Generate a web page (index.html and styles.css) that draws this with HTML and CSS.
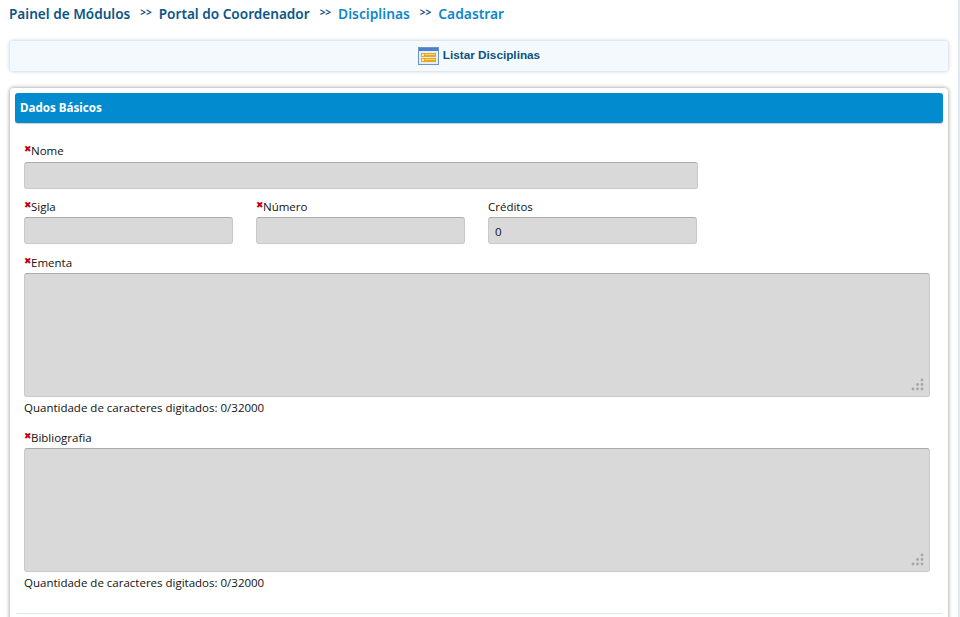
FILE: index.html
```html
<!DOCTYPE html>
<html lang="pt-BR">
<head>
<meta charset="utf-8">
<title>Cadastrar Disciplina</title>
<link rel="stylesheet" href="styles.css">
</head>
<body>
<div class="page">
  <nav class="crumbs">
    <span class="crumb">Painel de Módulos</span><span class="sep">&gt;&gt;</span>
    <span class="crumb">Portal do Coordenador</span><span class="sep">&gt;&gt;</span>
    <span class="crumb current">Disciplinas</span><span class="sep">&gt;&gt;</span>
    <span class="crumb current">Cadastrar</span>
  </nav>
  <div class="actions">
    <svg class="list-icon" width="21" height="18" viewBox="0 0 21 18">
      <rect x="0.5" y="0.5" width="20" height="17" fill="#e6eff9" stroke="#6c95c8"/>
      <rect x="1" y="1" width="19" height="3" fill="#4a7fcc"/>
      <rect x="3" y="6" width="15" height="4" fill="#e3a922"/>
      <rect x="3" y="11" width="15" height="4" fill="#e3a922"/>
      <rect x="7" y="7" width="10" height="1" fill="#f8d860"/>
      <rect x="7" y="12" width="10" height="1" fill="#f8d860"/>
      <rect x="4" y="7" width="2" height="2" fill="#fbeeb8"/>
      <rect x="4" y="12" width="2" height="2" fill="#fbeeb8"/>
    </svg>
    <span class="action-label">Listar Disciplinas</span>
  </div>
  <section class="panel">
    <h2 class="panel-title">Dados Básicos</h2>
    <form class="form">
      <div class="field name-field">
        <label class="label"><i class="req">✖</i>Nome</label>
        <div class="input"></div>
      </div>
      <div class="row">
        <div class="field"><label class="label"><i class="req">✖</i>Sigla</label><div class="input"></div></div>
        <div class="field"><label class="label"><i class="req">✖</i>Número</label><div class="input"></div></div>
        <div class="field"><label class="label">Créditos</label><div class="input">0</div></div>
      </div>
      <div class="field ementa-field">
        <label class="label"><i class="req">✖</i>Ementa</label>
        <div class="area"><svg class="grip" width="13" height="13" viewBox="0 0 13 13"><g fill="#a6a6a6"><circle cx="11" cy="2" r="1.4"/><circle cx="6.500" cy="6.500" r="1.400"/><circle cx="11" cy="6.500" r="1.400"/><circle cx="2" cy="11" r="1.400"/><circle cx="6.500" cy="11" r="1.400"/><circle cx="11" cy="11" r="1.400"/></g></svg></div>
        <p class="count">Quantidade de caracteres digitados: 0/32000</p>
      </div>
      <div class="field">
        <label class="label"><i class="req">✖</i>Bibliografia</label>
        <div class="area"><svg class="grip" width="13" height="13" viewBox="0 0 13 13"><g fill="#a6a6a6"><circle cx="11" cy="2" r="1.4"/><circle cx="6.500" cy="6.500" r="1.400"/><circle cx="11" cy="6.500" r="1.400"/><circle cx="2" cy="11" r="1.400"/><circle cx="6.500" cy="11" r="1.400"/><circle cx="11" cy="11" r="1.400"/></g></svg></div>
        <p class="count">Quantidade de caracteres digitados: 0/32000</p>
      </div>
    </form>
    <div class="rule"></div>
  </section>
</div>
</body>
</html>
```
FILE: styles.css
```css
* { box-sizing: border-box; }
html, body { margin: 0; height: 617px; overflow: hidden; background: #fff; }
body { font-family: "Open Sans", sans-serif; font-size: 11.5px; color: #111; }
.page {
  width: 960px; height: 617px; padding: 0 10px; overflow: hidden;
  border-right: 2px solid #e3e8ee;
}
.crumbs {
  height: 41px; padding-top: 5px; margin-left: -1px;
  display: flex; align-items: flex-start;
  font-family: "Noto Sans", sans-serif; font-size: 13.6px; font-weight: 600; line-height: 17px;
  color: #0c5588;
}
.crumb.current { color: #0f87cb; font-size: 13.8px; }
.sep { font-size: 10px; font-weight: 700; margin: 0 7px 0 10px; line-height: 15px; }
.actions {
  height: 30px; display: flex; align-items: center; justify-content: center; gap: 4px;
  background: #f4f9fd; border-radius: 3px;
  box-shadow: 0 0 4px rgba(130,160,185,.6);
}
.list-icon { display: block; }
.action-label { font-family: "Liberation Sans", sans-serif; font-weight: 700; font-size: 11.75px; line-height: 14px; margin-bottom: 2px; color: #0b5280; }
.panel {
  margin-top: 17px; height: 540px; padding: 5px 5px 0;
  background: #fff; border-radius: 4px 4px 0 0;
  box-shadow: 0 0 4px rgba(0,0,0,.45);
}
.panel-title {
  margin: 0; height: 30px; padding-left: 5px;
  background: #028ccf; border-radius: 3px;
  font-family: "Noto Sans", sans-serif; font-size: 11.6px; font-weight: 700; line-height: 29px; color: #fff;
  box-shadow: 0 1px 1px rgba(0,0,0,.2);
}
.form { padding: 20px 13px 0 9px; display: flex; flex-direction: column; }
.name-field { width: 674px; margin-bottom: 9px; }
.row { display: grid; grid-template-columns: 209px 209px 209px; column-gap: 23px; margin-bottom: 10px; }
.ementa-field { margin-bottom: 13px; }
.field { display: flex; flex-direction: column; }
.label { display: block; height: 16px; margin-bottom: 3px; line-height: 18px; }
.name-field .label { line-height: 16px; }
.req { font-style: normal; font-size: 9px; color: #c00010; vertical-align: 3px; display: inline-block; width: 7px; line-height: 8px; }
.input {
  height: 27px; padding-left: 6px; line-height: 27px;
  background: #d9d9d9; border: 1px solid #c9c9c9; border-top-color: #acacac; border-radius: 3px;
}
.area {
  position: relative; height: 124px;
  background: #d9d9d9; border: 1px solid #c9c9c9; border-top-color: #acacac; border-radius: 3px;
}
.grip { position: absolute; right: 5px; bottom: 5px; }
.count { margin: 3px 0 0; line-height: 16px; }
.rule { height: 1px; margin: 22px 1px 0; background: #d7e6f1; }
```
